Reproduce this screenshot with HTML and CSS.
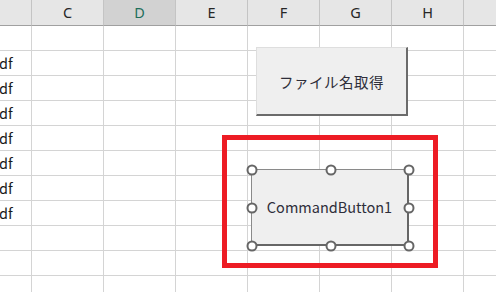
FILE: index.html
```html
<!DOCTYPE html>
<html lang="ja">
<head>
<meta charset="utf-8">
<link rel="stylesheet" href="styles.css">
</head>
<body>
<div class="sheet">
  <div class="grid">
    <div class="cell hd first"></div><div class="cell hd">C</div><div class="cell hd sel">D</div><div class="cell hd">E</div><div class="cell hd">F</div><div class="cell hd">G</div><div class="cell hd">H</div><div class="cell hd"></div>
    <div class="cell first"></div><div class="cell"></div><div class="cell"></div><div class="cell"></div><div class="cell"></div><div class="cell"></div><div class="cell"></div><div class="cell"></div>
    <div class="cell first"><span class="tail">df</span></div><div class="cell"></div><div class="cell"></div><div class="cell"></div><div class="cell"></div><div class="cell"></div><div class="cell"></div><div class="cell"></div>
    <div class="cell first"><span class="tail">df</span></div><div class="cell"></div><div class="cell"></div><div class="cell"></div><div class="cell"></div><div class="cell"></div><div class="cell"></div><div class="cell"></div>
    <div class="cell first"><span class="tail">df</span></div><div class="cell"></div><div class="cell"></div><div class="cell"></div><div class="cell"></div><div class="cell"></div><div class="cell"></div><div class="cell"></div>
    <div class="cell first"><span class="tail">df</span></div><div class="cell"></div><div class="cell"></div><div class="cell"></div><div class="cell"></div><div class="cell"></div><div class="cell"></div><div class="cell"></div>
    <div class="cell first"><span class="tail">df</span></div><div class="cell"></div><div class="cell"></div><div class="cell"></div><div class="cell"></div><div class="cell"></div><div class="cell"></div><div class="cell"></div>
    <div class="cell first"><span class="tail">df</span></div><div class="cell"></div><div class="cell"></div><div class="cell"></div><div class="cell"></div><div class="cell"></div><div class="cell"></div><div class="cell"></div>
    <div class="cell first"><span class="tail">df</span></div><div class="cell"></div><div class="cell"></div><div class="cell"></div><div class="cell"></div><div class="cell"></div><div class="cell"></div><div class="cell"></div>
    <div class="cell first"></div><div class="cell"></div><div class="cell"></div><div class="cell"></div><div class="cell"></div><div class="cell"></div><div class="cell"></div><div class="cell"></div>
    <div class="cell first"></div><div class="cell"></div><div class="cell"></div><div class="cell"></div><div class="cell"></div><div class="cell"></div><div class="cell"></div><div class="cell"></div>
    <div class="cell first"></div><div class="cell"></div><div class="cell"></div><div class="cell"></div><div class="cell"></div><div class="cell"></div><div class="cell"></div><div class="cell"></div>
  </div>

  <div class="btn btn-file">ファイル名取得</div>

  <div class="highlight"></div>

  <div class="btn btn-cmd">
    CommandButton1
    <span class="handle h-tl"></span>
    <span class="handle h-tc"></span>
    <span class="handle h-tr"></span>
    <span class="handle h-ml"></span>
    <span class="handle h-mr"></span>
    <span class="handle h-bl"></span>
    <span class="handle h-bc"></span>
    <span class="handle h-br"></span>
  </div>
</div>
</body>
</html>
```
FILE: styles.css
```css
html, body {
  margin: 0;
  padding: 0;
  background: #ffffff;
  overflow: hidden;
}

.sheet {
  position: relative;
  width: 496px;
  height: 292px;
  overflow: hidden;
  font-family: "Noto Sans CJK JP", "Noto Sans", sans-serif;
  color: #1f1f1f;
}

.grid {
  display: grid;
  grid-template-columns: 32px repeat(7, 72px);
  grid-template-rows: 26px;
  grid-auto-rows: 25px;
  width: 536px;
}

.cell {
  box-sizing: border-box;
  border-right: 1px solid #d4d4d4;
  border-bottom: 1px solid #d4d4d4;
  overflow: hidden;
  font-size: 14.5px;
  line-height: 24px;
  white-space: nowrap;
}

.cell.hd {
  background: #e6e6e6;
  border-right: 1px solid #c4c4c4;
  border-bottom: 1px solid #a0a0a0;
  text-align: center;
  font-family: "Noto Sans", "Liberation Sans", sans-serif;
  font-size: 14.5px;
  line-height: 24px;
  color: #262626;
}

.cell.hd.sel {
  background: #d2d2d2;
  color: #1e6e5a;
}

.tail {
  display: block;
  margin-left: -1px;
  line-height: 24px;
  color: #1a1a1a;
}

.btn {
  position: absolute;
  box-sizing: border-box;
  background: #efefef;
  display: flex;
  align-items: center;
  justify-content: center;
  color: #2e2e3a;
}

.btn-file {
  left: 256px;
  top: 47px;
  width: 152px;
  height: 69px;
  border-left: 1px solid #dedede;
  border-top: 1px solid #dedede;
  border-right: 2px solid #6b6b6b;
  border-bottom: 2px solid #6b6b6b;
  font-size: 14.5px;
  letter-spacing: 0.5px;
}

.highlight {
  position: absolute;
  left: 222px;
  top: 135px;
  width: 216px;
  height: 133px;
  box-sizing: border-box;
  border: 5px solid #ed1c24;
}

.btn-cmd {
  left: 251px;
  top: 169px;
  width: 158px;
  height: 77px;
  border-left: 1px solid #8a8a8a;
  border-top: 1px solid #8a8a8a;
  border-right: 2px solid #666666;
  border-bottom: 2px solid #666666;
  font-size: 14.5px;
  padding-bottom: 1px;
}

.handle {
  position: absolute;
  width: 11px;
  height: 11px;
  box-sizing: border-box;
  border: 2px solid #666666;
  border-radius: 50%;
  background: #ffffff;
  transform: translate(-50%, -50%);
}

.h-tl { left: -0.5px; top: -0.5px; }
.h-tc { left: 78.5px; top: -0.5px; }
.h-tr { left: 156.5px; top: -0.5px; }
.h-ml { left: -0.5px; top: 37.5px; }
.h-mr { left: 156.5px; top: 37.5px; }
.h-bl { left: -0.5px; top: 75.5px; }
.h-bc { left: 78.5px; top: 75.5px; }
.h-br { left: 156.5px; top: 75.5px; }
```
